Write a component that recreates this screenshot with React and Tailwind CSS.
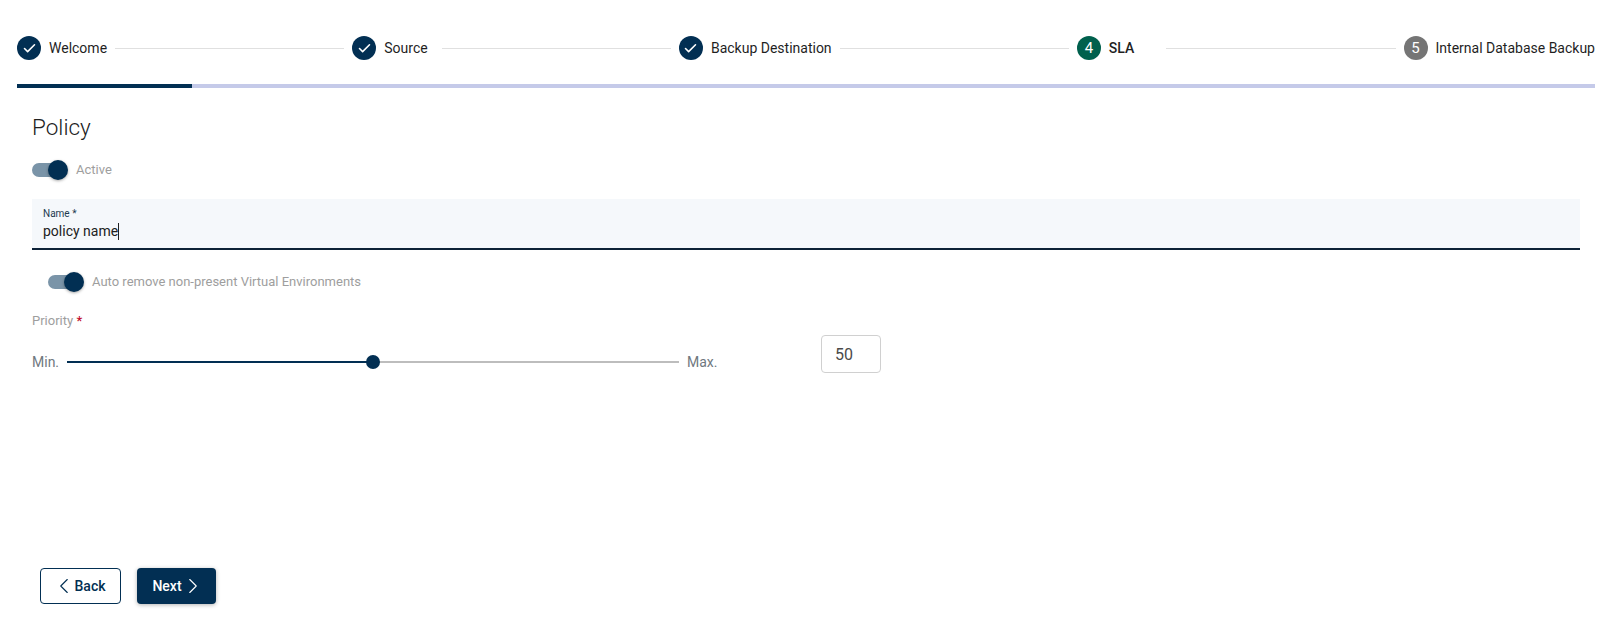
import { Fragment } from 'react';
import { Check, ChevronLeft, ChevronRight } from 'lucide-react';

const steps = [
  { label: 'Welcome', done: true },
  { label: 'Source', done: true, pad: 'pr-[6px]' },
  { label: 'Backup Destination', done: true },
  { label: 'SLA', num: 4, active: true, pad: 'pr-6' },
  { label: 'Internal Database Backup', num: 5 },
];

function Step({ step }) {
  const circle = step.done ? 'bg-[#022f53]' : step.active ? 'bg-[#00604d]' : 'bg-[#757575]';
  return (
    <div className="flex items-center gap-2 shrink-0">
      <span className={`w-6 h-6 rounded-full flex items-center justify-center text-white text-[15px] ${circle}`}>
        {step.done ? <Check size={15} strokeWidth={2.5} /> : step.num}
      </span>
      <span className={`text-[14px] text-[#1f1f1f] ${step.active ? 'font-medium' : ''} ${step.pad || ''}`}>
        {step.label}
      </span>
    </div>
  );
}

function Toggle({ label }) {
  return (
    <div className="flex items-center gap-2">
      <span className="relative w-9 h-5 flex items-center">
        <span className="w-8 h-[14px] rounded-full bg-[#7a94a8]" />
        <span className="absolute left-4 top-0 w-5 h-5 rounded-full bg-[#022f53] shadow-[0_1px_3px_rgba(0,0,0,0.35)]" />
      </span>
      <span className="text-[13px] text-[#9e9e9e]">{label}</span>
    </div>
  );
}

export default function App() {
  return (
    <div className="h-[628px] flex flex-col bg-white font-['Roboto',sans-serif] overflow-hidden">
      <div className="px-[17px] pt-9">
        <div className="flex items-center h-6">
          {steps.map((step, i) => (
            <Fragment key={step.label}>
              <Step step={step} />
              {i < steps.length - 1 && <div className="flex-1 h-px bg-[#e0e0e0] mx-2" />}
            </Fragment>
          ))}
        </div>
        <div className="mt-6 h-1 bg-[#c5cae9]">
          <div className="w-[175px] h-1 bg-[#022f53]" />
        </div>
      </div>

      <div className="px-8 flex-1 flex flex-col">
        <h2 className="mt-6 text-[22.5px] leading-[30px] font-light text-[#212121]">Policy</h2>
        <div className="mt-[18px]">
          <Toggle label="Active" />
        </div>
        <div className="mt-[19px] h-[51px] bg-[#f5f8fb] border-b-2 border-[#0d2237] px-[11px] pt-[9px]">
          <div className="text-[10px] leading-[11px] text-[#1d3a50]">Name *</div>
          <div className="mt-[2px] text-[14px] leading-[20px] text-[#212121] flex items-center">
            policy name<span className="w-px h-[17px] bg-[#212121]" />
          </div>
        </div>
        <div className="mt-[22px] pl-4">
          <Toggle label="Auto remove non-present Virtual Environments" />
        </div>
        <div className="mt-[21px] text-[13px] leading-[16px] text-[#9e9e9e]">
          Priority <span className="text-[#c2102f] font-medium">*</span>
        </div>
        <div className="flex items-start mt-[6px]">
          <div className="flex items-center h-[38px] pt-[16px] w-[655px]">
            <span className="text-[14px] text-[#6f7880] w-[35px]">Min.</span>
            <div className="relative w-[612px] h-[2px] bg-[#bdbdbd]">
              <div className="w-[306px] h-[2px] bg-[#022f53]" />
              <span className="absolute left-[299px] -top-[6px] w-[14px] h-[14px] rounded-full bg-[#022f53]" />
            </div>
          </div>
          <span className="text-[14px] text-[#6f7880] pt-[17px] w-[134px]">Max.</span>
          <div className="w-[60px] h-[38px] border border-[#d0d0d0] rounded flex items-center pl-[13px] pt-px text-[16px] text-[#4a4a4a]">
            50
          </div>
        </div>

        <div className="mt-auto mb-6 pl-2 flex gap-4">
          <button className="w-[81px] h-9 pr-[5px] border border-[#022f53] rounded text-[14px] font-medium text-[#022f53] flex items-center justify-center">
            <ChevronLeft size={26} strokeWidth={1} className="-mr-0.5" /> Back
          </button>
          <button className="w-[79px] h-9 pl-[5px] bg-[#022f53] rounded text-[14px] font-medium text-white flex items-center justify-center shadow-[0_1px_4px_rgba(0,0,0,0.3)]">
            Next <ChevronRight size={26} strokeWidth={1} className="-ml-0.5" />
          </button>
        </div>
      </div>
    </div>
  );
}
